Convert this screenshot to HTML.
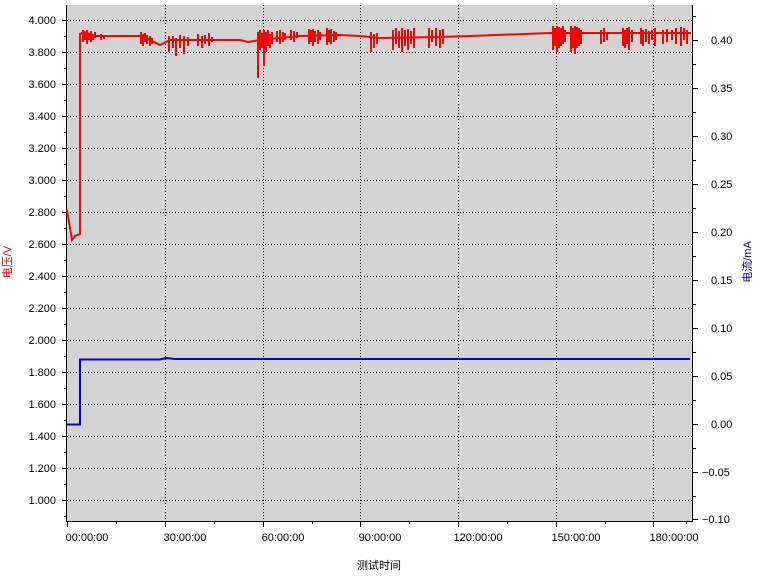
<!DOCTYPE html>
<html><head><meta charset="utf-8"><style>
html,body{margin:0;padding:0;background:#fff;width:762px;height:580px;overflow:hidden}
svg text{font-family:"Liberation Sans","Noto Sans CJK SC",sans-serif;font-size:11px;fill:#000}
</style></head><body>
<svg width="762" height="580" xmlns="http://www.w3.org/2000/svg">
<rect x="67" y="5" width="625" height="516" fill="#d3d3d3"/>
<g stroke="#000" stroke-width="1" stroke-dasharray="1,2" fill="none">
<path d="M67 20.5H692M67 52.5H692M67 84.5H692M67 116.5H692M67 148.5H692M67 180.5H692M67 212.5H692M67 244.5H692M67 276.5H692M67 308.5H692M67 340.5H692M67 372.5H692M67 404.5H692M67 436.5H692M67 468.5H692M67 500.5H692"/>
<path d="M165.5 5V521M263.5 5V521M360.5 5V521M458.5 5V521M556.5 5V521M653.5 5V521"/>
</g>
<g stroke="#000" stroke-width="1" fill="none">
<path d="M66.5 5V521.5H692.5V5"/>
<path d="M62 20.5H67M62 52.5H67M62 84.5H67M62 116.5H67M62 148.5H67M62 180.5H67M62 212.5H67M62 244.5H67M62 276.5H67M62 308.5H67M62 340.5H67M62 372.5H67M62 404.5H67M62 436.5H67M62 468.5H67M62 500.5H67"/>
<path d="M64 36.5H67M64 68.5H67M64 100.5H67M64 132.5H67M64 164.5H67M64 196.5H67M64 228.5H67M64 260.5H67M64 292.5H67M64 324.5H67M64 356.5H67M64 388.5H67M64 420.5H67M64 452.5H67M64 484.5H67M64 516.5H67"/>
<path d="M692 40.5H698M692 88.5H698M692 136.5H698M692 184.5H698M692 232.5H698M692 280.5H698M692 328.5H698M692 376.5H698M692 424.5H698M692 472.5H698M692 519.5H698"/>
<path d="M692 16.5H696M692 64.5H696M692 112.5H696M692 160.5H696M692 208.5H696M692 256.5H696M692 304.5H696M692 352.5H696M692 400.5H696M692 448.5H696M692 496.5H696"/>
<path d="M67.5 521V527M165.5 521V527M263.5 521V527M360.5 521V527M458.5 521V527M556.5 521V527M653.5 521V527"/>
<path d="M116.5 521V524M214.5 521V524M312.5 521V524M409.5 521V524M507.5 521V524M605.5 521V524M686.5 521V524"/>
</g>
<g text-anchor="end">
<text x="56" y="24">4.000</text><text x="56" y="56">3.800</text><text x="56" y="88">3.600</text><text x="56" y="120">3.400</text><text x="56" y="152">3.200</text><text x="56" y="184">3.000</text><text x="56" y="216">2.800</text><text x="56" y="248">2.600</text><text x="56" y="280">2.400</text><text x="56" y="312">2.200</text><text x="56" y="344">2.000</text><text x="56" y="376">1.800</text><text x="56" y="408">1.600</text><text x="56" y="440">1.400</text><text x="56" y="472">1.200</text><text x="56" y="504">1.000</text>
</g>
<g>
<text x="711" y="44">0.40</text><text x="711" y="92">0.35</text><text x="711" y="140">0.30</text><text x="711" y="188">0.25</text><text x="711" y="236">0.20</text><text x="711" y="284">0.15</text><text x="711" y="332">0.10</text><text x="711" y="380">0.05</text><text x="711" y="428">0.00</text><text x="702" y="476">−0.05</text><text x="702" y="523">−0.10</text>
</g>
<g text-anchor="middle">
<text x="87" y="541">00:00:00</text><text x="185" y="541">30:00:00</text><text x="283" y="541">60:00:00</text><text x="380" y="541">90:00:00</text><text x="478" y="541">120:00:00</text><text x="576" y="541">150:00:00</text><text x="674" y="541">180:00:00</text>
<text x="379" y="569" font-size="12">测试时间</text>
</g>
<text transform="translate(11,262) rotate(-90)" text-anchor="middle" style="fill:#d00">电压/V</text>
<text transform="translate(751,262) rotate(-90)" text-anchor="middle" style="fill:#00a">电流/mA</text>
<!-- blue current -->
<path d="M67 424.5H80V359.5H160L166 358L175 359H690" stroke="#0000e0" stroke-width="2" fill="none"/>
<!-- red voltage -->
<g stroke="#f00" stroke-width="2" fill="none">
<path d="M67 210L70 228L72 240L75 236L80 234V34L84 32L96 36L140 36L150 40L160 45L170 40L240 40L248 42L260 40L300 36L340 35L360 36L380 38L440 37L470 36L550 33L691 33"/>
<path d="M83 30V42M85 32V40M87 30V44M89 33V40M91 31V42M93 34V40M95 32V38M101 34V40M104 35V39M141 32V44M143 34V46M145 33V42M147 35V44M150 36V46M152 38V44M169 36V52M173 36V48M176 38V56M180 35V48M184 36V54M188 37V46M198 34V46M202 36V48M205 35V44M209 33V46M212 37V42M258 32V78M260 30V50M262 33V48M264 30V66M266 32V52M268 30V46M270 34V48M272 32V44M277 31V42M280 30V44M283 32V42M285 33V40M291 30V40M294 31V42M297 32V38M309 29V44M311 30V42M313 29V46M315 31V42M318 30V44M320 32V40M327 28V45M329 30V42M331 29V44M334 31V42M336 32V40M371 32V52M374 34V48M377 33V44M393 30V50M396 28V44M399 31V48M402 28V52M405 30V46M408 29V50M411 31V44M414 28V48M429 28V48M432 30V42M436 28V46M440 30V48M443 29V44M553 26V50M555 28V46M557 26V52M559 27V48M561 28V46M563 26V44M565 30V42M571 26V52M573 28V48M575 26V54M577 27V48M579 28V46M581 30V44M601 30V44M604 28V42M607 32V40M623 28V46M625 30V48M627 28V44M629 27V50M632 30V42M641 28V44M643 30V46M646 29V42M649 31V44M652 30V40M655 28V46M663 30V44M667 29V42M672 30V40M676 28V44M681 27V46M684 28V40M687 30V44"/>
</g>
</svg>
</body></html>
